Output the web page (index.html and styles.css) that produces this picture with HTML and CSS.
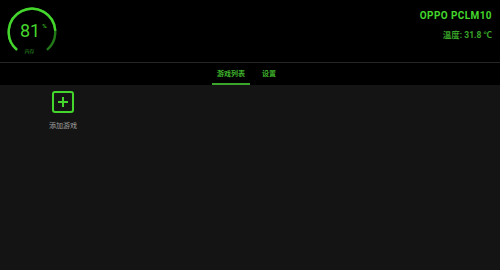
FILE: index.html
```html
<!DOCTYPE html>
<html lang="zh">

<head>
  <meta charset="UTF-8">
  <meta name="viewport" content="width=device-width, initial-scale=1.0">
  <title>游戏空间</title>
  <link rel="stylesheet" href="styles.css">
</head>

<body>
  <div class="header">
    <div class="gauge">
      <svg class="gauge-ring" width="52" height="52" viewBox="0 0 52 52">
        <!-- track: 280deg sweep, gap of 80deg at the bottom -->
        <path d="M 11.02 43.85 A 23.3 23.3 0 1 1 40.98 43.85" fill="none" stroke="#217a17" stroke-width="2.4" />
        <!-- 81% of the track -->
        <path d="M 11.02 43.85 A 23.3 23.3 0 1 1 49.27 24.78" fill="none" stroke="#44d62c" stroke-width="2.4" />
      </svg>
      <div class="gauge-value">81<span class="gauge-unit">%</span></div>
      <div class="gauge-label">内存</div>
    </div>

    <div class="device">
      <div class="device-name">OPPO PCLM10</div>
      <div class="device-temp">温度: 31.8 ℃</div>
    </div>
  </div>

  <div class="tabs">
    <div class="tab active">游戏列表</div>
    <div class="tab">设置</div>
  </div>

  <div class="content">
    <div class="game-item">
      <div class="add-box">
        <svg width="12" height="12" viewBox="0 0 12 12">
          <path d="M6 1 V11 M1 6 H11" stroke="#44d62c" stroke-width="2" />
        </svg>
      </div>
      <div class="game-name">添加游戏</div>
    </div>
  </div>
</body>

</html>
```

FILE: styles.css
```css
* {
  margin: 0;
  padding: 0;
  box-sizing: border-box;
}

body {
  font-family: 'Noto Sans CJK SC', 'Liberation Sans', sans-serif;
  background: #141414;
  width: 500px;
  height: 270px;
  overflow: hidden;
}

.header {
  background: #000;
  height: 63px;
  display: flex;
  justify-content: space-between;
  align-items: flex-start;
  border-bottom: 1px solid #262626;
}

.gauge {
  position: relative;
  width: 52px;
  height: 52px;
  margin: 6px 0 0 6px;
}

.gauge-ring {
  position: absolute;
  left: 0;
  top: 0;
}

.gauge-value {
  position: absolute;
  left: 14px;
  top: 16px;
  font-family: 'Roboto', 'Liberation Sans', sans-serif;
  font-size: 18px;
  line-height: 18px;
  color: #44d62c;
}

.gauge-unit {
  font-size: 6px;
  line-height: 6px;
  vertical-align: top;
  margin-left: 2px;
  position: relative;
  top: 1px;
}

.gauge-label {
  position: absolute;
  left: 0;
  width: 47px;
  top: 42px;
  text-align: center;
  font-size: 5px;
  line-height: 6px;
  color: #2f9a21;
}

.device {
  text-align: right;
  padding: 9px 8px 0 0;
}

.device-name {
  font-family: 'Roboto', 'Liberation Sans', sans-serif;
  font-weight: bold;
  font-size: 10px;
  line-height: 14px;
  color: #44d62c;
  letter-spacing: 0.4px;
}

.device-temp {
  font-family: 'Roboto', 'Noto Sans CJK SC', sans-serif;
  font-weight: bold;
  font-size: 8.5px;
  line-height: 12px;
  margin-top: 6px;
  color: #3aa52a;
}

.tabs {
  background: #000;
  height: 22px;
  display: flex;
  justify-content: center;
  gap: 7px;
  padding-right: 7px;
}

.tab {
  font-size: 7px;
  font-weight: bold;
  line-height: 20px;
  padding: 0 5px;
  color: #3fb02c;
  border-bottom: 2px solid transparent;
}

.tab.active {
  border-bottom-color: #3aa52a;
}

.content {
  padding: 6px 0 0 43px;
}

.game-item {
  width: 40px;
  display: flex;
  flex-direction: column;
  align-items: center;
}

.add-box {
  width: 22px;
  height: 22px;
  border: 2px solid #44d62c;
  border-radius: 3px;
  display: flex;
  align-items: center;
  justify-content: center;
}

.game-name {
  font-size: 7px;
  line-height: 10px;
  margin-top: 7px;
  color: #a0a0a0;
}
```
